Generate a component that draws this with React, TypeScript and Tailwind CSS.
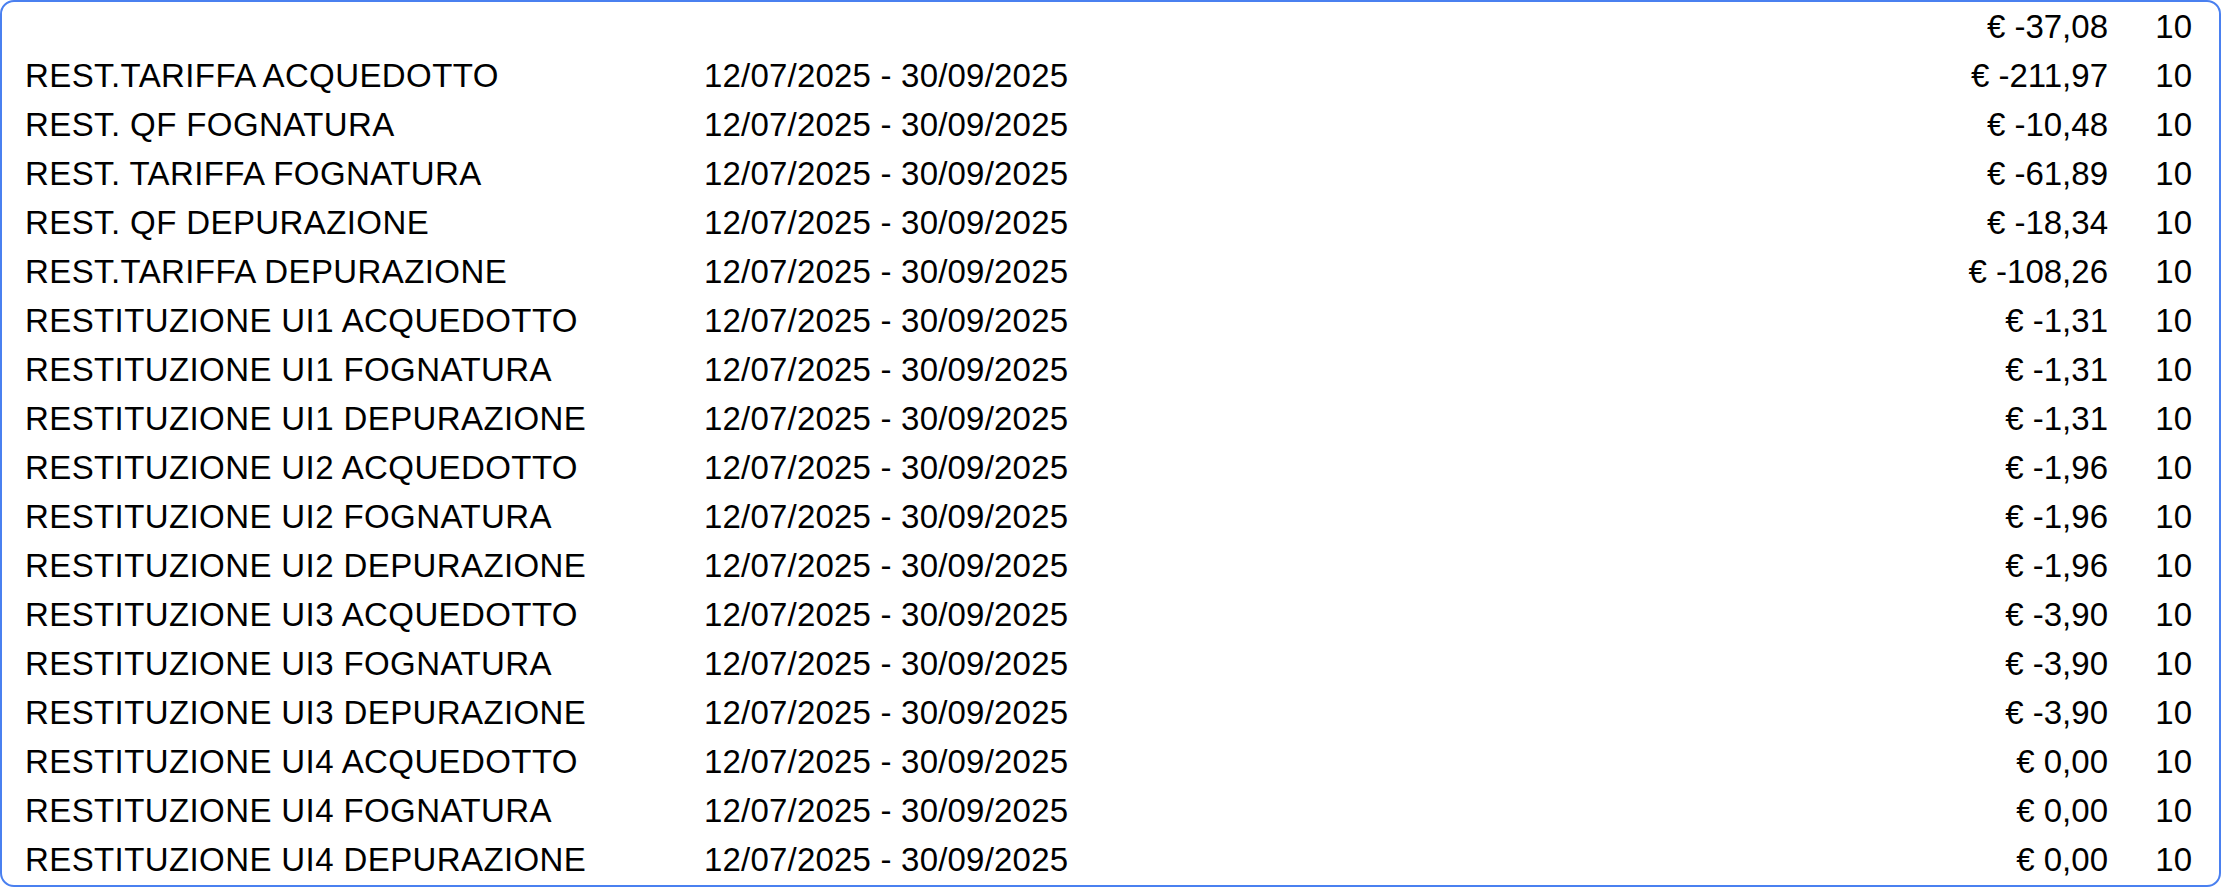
const period = '12/07/2025 - 30/09/2025';

type Row = { label: string; period: string; amount: string; qty: string };

const rows: Row[] = [
  { label: '', period: '', amount: '€ -37,08', qty: '10' },
  { label: 'REST.TARIFFA ACQUEDOTTO', period, amount: '€ -211,97', qty: '10' },
  { label: 'REST. QF FOGNATURA', period, amount: '€ -10,48', qty: '10' },
  { label: 'REST. TARIFFA FOGNATURA', period, amount: '€ -61,89', qty: '10' },
  { label: 'REST. QF DEPURAZIONE', period, amount: '€ -18,34', qty: '10' },
  { label: 'REST.TARIFFA DEPURAZIONE', period, amount: '€ -108,26', qty: '10' },
  { label: 'RESTITUZIONE UI1 ACQUEDOTTO', period, amount: '€ -1,31', qty: '10' },
  { label: 'RESTITUZIONE UI1 FOGNATURA', period, amount: '€ -1,31', qty: '10' },
  { label: 'RESTITUZIONE UI1 DEPURAZIONE', period, amount: '€ -1,31', qty: '10' },
  { label: 'RESTITUZIONE UI2 ACQUEDOTTO', period, amount: '€ -1,96', qty: '10' },
  { label: 'RESTITUZIONE UI2 FOGNATURA', period, amount: '€ -1,96', qty: '10' },
  { label: 'RESTITUZIONE UI2 DEPURAZIONE', period, amount: '€ -1,96', qty: '10' },
  { label: 'RESTITUZIONE UI3 ACQUEDOTTO', period, amount: '€ -3,90', qty: '10' },
  { label: 'RESTITUZIONE UI3 FOGNATURA', period, amount: '€ -3,90', qty: '10' },
  { label: 'RESTITUZIONE UI3 DEPURAZIONE', period, amount: '€ -3,90', qty: '10' },
  { label: 'RESTITUZIONE UI4 ACQUEDOTTO', period, amount: '€ 0,00', qty: '10' },
  { label: 'RESTITUZIONE UI4 FOGNATURA', period, amount: '€ 0,00', qty: '10' },
  { label: 'RESTITUZIONE UI4 DEPURAZIONE', period, amount: '€ 0,00', qty: '10' },
];

export default function App() {
  return (
    <div className="min-h-screen bg-white font-['Liberation_Sans',Arial,sans-serif] text-black">
      <div className="w-[2221px] h-[887px] border-2 border-[#4a80f0] rounded-[14px] pl-[23px] pr-[27px]">
        {rows.map((r, i) => (
          <div key={i} className="flex items-center h-[49px] text-[33px] leading-[49px] whitespace-nowrap">
            <div className="w-[679px] tracking-[0.4px]">{r.label}</div>
            <div className="flex-1 tracking-[0.2px]">{r.period}</div>
            <div className="text-right">{r.amount}</div>
            <div className="w-[84px] text-right">{r.qty}</div>
          </div>
        ))}
      </div>
    </div>
  );
}
